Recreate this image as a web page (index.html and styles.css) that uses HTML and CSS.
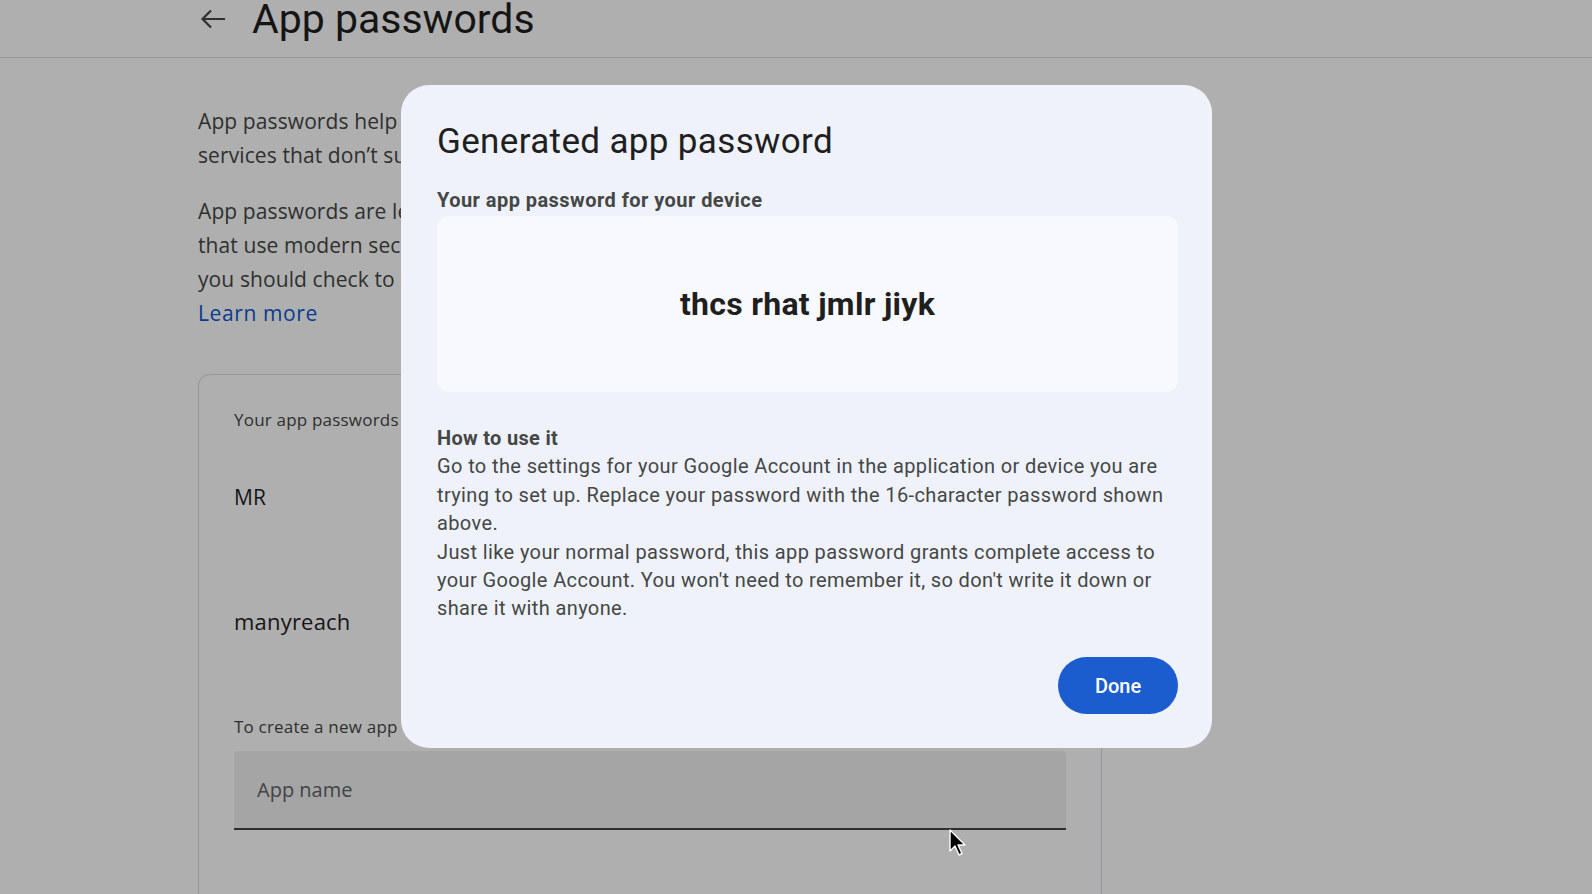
FILE: index.html
```html
<!DOCTYPE html>
<html lang="en">
<head>
  <meta charset="UTF-8">
  <title>App passwords</title>
  <link rel="stylesheet" href="styles.css">
</head>
<body>
  <header class="topbar">
    <div class="topbar-inner">
      <svg class="back" width="26" height="24" viewBox="0 0 26 24"><path d="M25 12H3M11 3.5 2.5 12l8.5 8.5" fill="none" stroke="#444746" stroke-width="2.2"/></svg>
      <h1 class="page-title">App passwords</h1>
    </div>
  </header>

  <main class="content">
    <p class="intro">App passwords help you sign in to your Google Account on older apps and<br>services that don’t support modern security standards.</p>
    <p class="intro">App passwords are less secure than using up-to-date apps and services<br>that use modern security standards. Before you create an app password,<br>you should check to see if your app needs this in order to sign in.<br><a href="#">Learn more</a></p>

    <section class="card">
      <div class="card-label">Your app passwords</div>
      <div class="app-row">MR</div>
      <div class="app-row">manyreach</div>
      <div class="card-label create">To create a new app specific password, type a name for it below...</div>
      <div class="field">App name</div>
    </section>
  </main>

  <div class="scrim"></div>

  <div class="dialog" role="dialog">
    <h2 class="dialog-title">Generated app password</h2>
    <div class="dialog-label">Your app password for your device</div>
    <div class="password-box">thcs rhat jmlr jiyk</div>
    <div class="howto">
      <div class="howto-title">How to use it</div>
      <p>Go to the settings for your Google Account in the application or device you are trying to set up. Replace your password with the 16-character password shown above.</p>
      <p>Just like your normal password, this app password grants complete access to your Google Account. You won't need to remember it, so don't write it down or share it with anyone.</p>
    </div>
    <div class="actions">
      <button class="done">Done</button>
    </div>
  </div>

  <svg class="cursor" width="18" height="27" viewBox="0 0 18 27"><path d="M1 1v21l5-5 4 9 3-1.5-4-8.5h7z" fill="#000" stroke="#fff" stroke-width="1.4" stroke-linejoin="round"/></svg>
</body>
</html>
```

FILE: styles.css
```css
body {
  margin: 0;
  background: #fff;
  font-family: "Open Sans", Roboto, sans-serif;
  color: #1f1f1f;
  height: 894px;
  overflow: hidden;
}
.topbar {
  height: 57px;
  border-bottom: 1px solid #dadce0;
}
.topbar-inner {
  display: flex;
  align-items: center;
  gap: 26px;
  padding-left: 200px;
  height: 38px;
}
.page-title {
  margin: 0;
  font-family: Roboto, sans-serif;
  font-size: 41px;
  font-weight: 400;
  line-height: 38px;
}
.content {
  padding-left: 198px;
  width: 904px;
}
/* page text sits partly under the dialog; clip it at the dialog edge */
.intro {
  margin: 22px 0 0;
  width: 203px;
  overflow: hidden;
  white-space: nowrap;
  font-size: 21px;
  letter-spacing: 0.1px;
  line-height: 34px;
  color: #444746;
}
.intro:first-child {
  margin-top: 46px;
}
.intro a {
  color: #0b57d0;
  text-decoration: none;
  letter-spacing: 0.6px;
}
.card {
  margin-top: 44px;
  border: 1px solid #dadce0;
  border-radius: 12px;
  padding: 33px 35px 200px;
}
.card-label {
  width: 166px;
  overflow: hidden;
  white-space: nowrap;
  font-size: 17px;
  letter-spacing: 0.2px;
  color: #444746;
  line-height: 24px;
}
.app-row {
  font-size: 21px;
  line-height: 30px;
  padding: 50px 0 47px;
}
.app-row + .app-row {
  font-size: 22px;
  letter-spacing: 0.2px;
  padding-top: 47px;
}
.card-label.create {
  width: 168px;
  margin-top: 32px;
}
.field {
  margin-top: 12px;
  height: 77px;
  background: #f0f0f2;
  border-bottom: 2px solid #444;
  border-radius: 4px 4px 0 0;
  padding-left: 23px;
  display: flex;
  align-items: center;
  font-size: 20px;
  color: #5f6368;
}
.scrim {
  position: fixed;
  inset: 0;
  background: rgba(0, 0, 0, 0.315);
}
.dialog {
  position: absolute;
  left: 401px;
  top: 85px;
  width: 811px;
  height: 663px;
  box-sizing: border-box;
  padding: 33px 34px 34px 36px;
  background: #eff2fa;
  border-radius: 28px;
  display: flex;
  flex-direction: column;
  font-family: Roboto, sans-serif;
}
.dialog-title {
  margin: 0;
  font-size: 35px;
  font-weight: 400;
  letter-spacing: 0.35px;
  line-height: 48px;
  color: #1f1f1f;
}
.dialog-label {
  margin-top: 22px;
  font-size: 20px;
  font-weight: 700;
  letter-spacing: 0.45px;
  color: #444746;
  line-height: 24px;
}
.password-box {
  margin-top: 4px;
  height: 176px;
  background: #f8f9fe;
  border-radius: 12px;
  display: flex;
  align-items: center;
  justify-content: center;
  font-size: 32px;
  font-weight: 700;
  letter-spacing: 0.3px;
  color: #1f1f1f;
}
.howto {
  margin-top: 32px;
  font-size: 20px;
  letter-spacing: 0.38px;
  line-height: 28.4px;
  color: #444746;
}
.howto-title {
  font-weight: 700;
  letter-spacing: 0.3px;
}
.howto p {
  margin: 0;
}
.actions {
  margin-top: auto;
  display: flex;
  justify-content: flex-end;
}
.done {
  width: 120px;
  height: 57px;
  border: none;
  border-radius: 29px;
  background: #1b5ccf;
  color: #fff;
  font-family: Roboto, sans-serif;
  font-size: 20px;
  font-weight: 500;
}
.cursor {
  position: absolute;
  left: 949px;
  top: 829px;
}
```
